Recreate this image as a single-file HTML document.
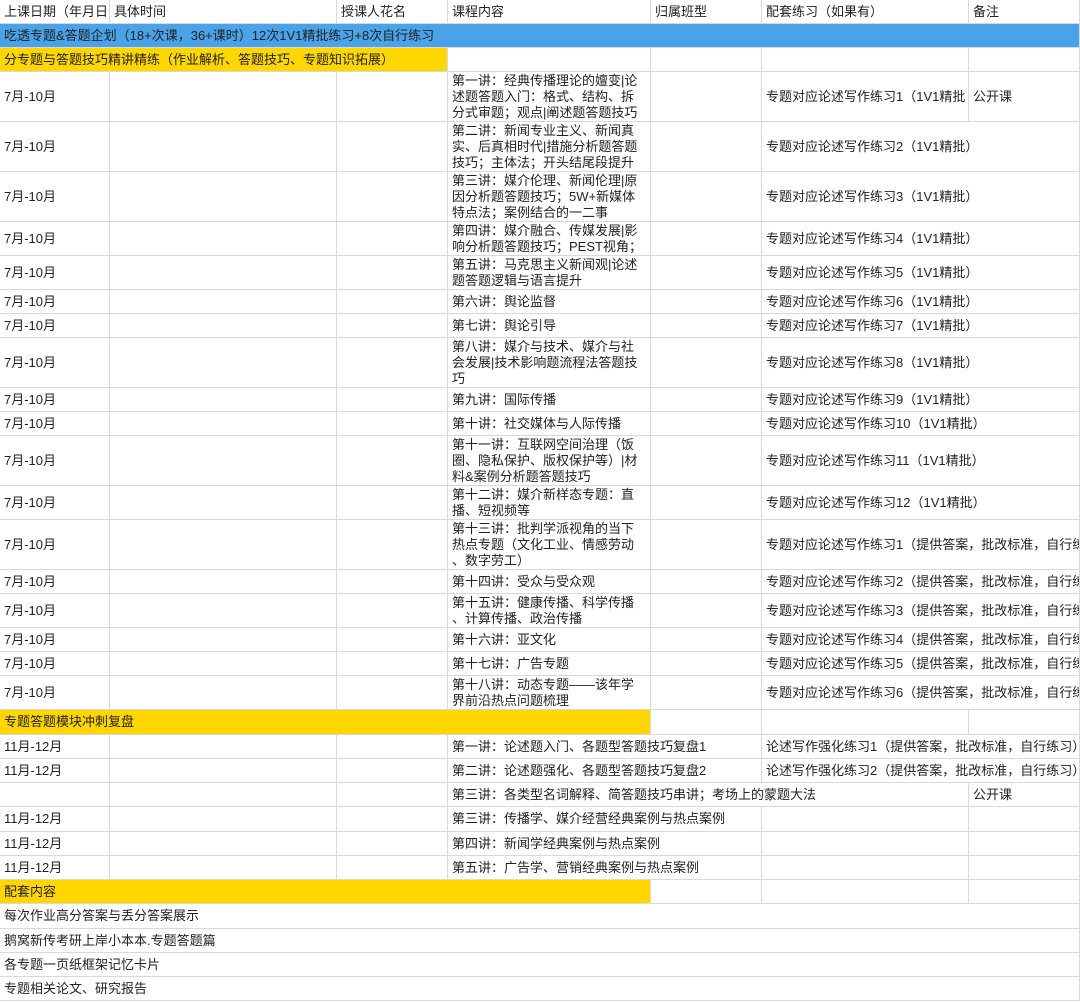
<!DOCTYPE html>
<html><head><meta charset="utf-8">
<style>
html,body{margin:0;padding:0;background:#fff;}
body{width:1080px;height:1002px;position:relative;overflow:hidden;font-family:"Liberation Sans","Noto Sans CJK SC",sans-serif;font-size:13px;color:#222;}
.c{position:absolute;box-sizing:border-box;border-right:1px solid #d9d9d9;border-bottom:1px solid #d9d9d9;padding:0 4px;display:flex;align-items:center;line-height:16px;white-space:nowrap;overflow:hidden;}
.b{background:#4aa3e8;}
.y{background:#ffd600;}
</style></head><body>
<div class="c" style="left:0;top:0;width:110px;height:24px">上课日期（年月日</div>
<div class="c" style="left:110px;top:0;width:227px;height:24px">具体时间</div>
<div class="c" style="left:337px;top:0;width:111px;height:24px">授课人花名</div>
<div class="c" style="left:448px;top:0;width:203px;height:24px">课程内容</div>
<div class="c" style="left:651px;top:0;width:111px;height:24px">归属班型</div>
<div class="c" style="left:762px;top:0;width:207px;height:24px">配套练习（如果有）</div>
<div class="c" style="left:969px;top:0;width:111px;height:24px">备注</div>
<div class="c b" style="left:0;top:24px;width:1080px;height:24px">吃透专题&amp;答题企划（18+次课，36+课时）12次1V1精批练习+8次自行练习</div>
<div class="c y" style="left:0;top:48px;width:448px;height:24px">分专题与答题技巧精讲精练（作业解析、答题技巧、专题知识拓展）</div>
<div class="c" style="left:448px;top:48px;width:203px;height:24px"></div>
<div class="c" style="left:651px;top:48px;width:111px;height:24px"></div>
<div class="c" style="left:762px;top:48px;width:207px;height:24px"></div>
<div class="c" style="left:969px;top:48px;width:111px;height:24px"></div>
<div id="rows"></div>
<script>
var R=[
[72,50,"7月-10月","第一讲：经典传播理论的嬗变|论<br>述题答题入门：格式、结构、拆<br>分式审题；观点|阐述题答题技巧","专题对应论述写作练习1（1V1精批","公开课"],
[122,50,"7月-10月","第二讲：新闻专业主义、新闻真<br>实、后真相时代|措施分析题答题<br>技巧；主体法；开头结尾段提升","专题对应论述写作练习2（1V1精批）"],
[172,50,"7月-10月","第三讲：媒介伦理、新闻伦理|原<br>因分析题答题技巧；5W+新媒体<br>特点法；案例结合的一二事","专题对应论述写作练习3（1V1精批）"],
[222,34,"7月-10月","第四讲：媒介融合、传媒发展|影<br>响分析题答题技巧；PEST视角；","专题对应论述写作练习4（1V1精批）"],
[256,34,"7月-10月","第五讲：马克思主义新闻观|论述<br>题答题逻辑与语言提升","专题对应论述写作练习5（1V1精批）"],
[290,24,"7月-10月","第六讲：舆论监督","专题对应论述写作练习6（1V1精批）"],
[314,24,"7月-10月","第七讲：舆论引导","专题对应论述写作练习7（1V1精批）"],
[338,50,"7月-10月","第八讲：媒介与技术、媒介与社<br>会发展|技术影响题流程法答题技<br>巧","专题对应论述写作练习8（1V1精批）"],
[388,24,"7月-10月","第九讲：国际传播","专题对应论述写作练习9（1V1精批）"],
[412,24,"7月-10月","第十讲：社交媒体与人际传播","专题对应论述写作练习10（1V1精批）"],
[436,50,"7月-10月","第十一讲：互联网空间治理（饭<br>圈、隐私保护、版权保护等）|材<br>料&amp;案例分析题答题技巧","专题对应论述写作练习11（1V1精批）"],
[486,34,"7月-10月","第十二讲：媒介新样态专题：直<br>播、短视频等","专题对应论述写作练习12（1V1精批）"],
[520,50,"7月-10月","第十三讲：批判学派视角的当下<br>热点专题（文化工业、情感劳动<br>、数字劳工）","专题对应论述写作练习1（提供答案，批改标准，自行练习）"],
[570,24,"7月-10月","第十四讲：受众与受众观","专题对应论述写作练习2（提供答案，批改标准，自行练习）"],
[594,34,"7月-10月","第十五讲：健康传播、科学传播<br>、计算传播、政治传播","专题对应论述写作练习3（提供答案，批改标准，自行练习）"],
[628,24,"7月-10月","第十六讲：亚文化","专题对应论述写作练习4（提供答案，批改标准，自行练习）"],
[652,24,"7月-10月","第十七讲：广告专题","专题对应论述写作练习5（提供答案，批改标准，自行练习）"],
[676,34,"7月-10月","第十八讲：动态专题——该年学<br>界前沿热点问题梳理","专题对应论述写作练习6（提供答案，批改标准，自行练习）"]
];
var h="";
function c(l,t,w,ht,txt,cls){h+='<div class="c'+(cls?' '+cls:'')+'" style="left:'+l+'px;top:'+t+'px;width:'+w+'px;height:'+ht+'px">'+(txt||'')+'</div>';}
R.forEach(function(r){
c(0,r[0],110,r[1],r[2]);c(110,r[0],227,r[1]);c(337,r[0],111,r[1]);c(448,r[0],203,r[1],r[3]);c(651,r[0],111,r[1]);
if(r[5]){c(762,r[0],207,r[1],r[4]);c(969,r[0],111,r[1],r[5]);}else c(762,r[0],318,r[1],r[4]);
});
c(0,710,651,25,"专题答题模块冲刺复盘","y");c(651,710,111,25);c(762,710,207,25);c(969,710,111,25);
var S=[[735,24,"11月-12月","第一讲：论述题入门、各题型答题技巧复盘1","论述写作强化练习1（提供答案，批改标准，自行练习）"],
[759,24,"11月-12月","第二讲：论述题强化、各题型答题技巧复盘2","论述写作强化练习2（提供答案，批改标准，自行练习）"]];
S.forEach(function(r){c(0,r[0],110,r[1],r[2]);c(110,r[0],227,r[1]);c(337,r[0],111,r[1]);c(448,r[0],314,r[1],r[3]);c(762,r[0],318,r[1],r[4]);});
c(0,783,110,24);c(110,783,227,24);c(337,783,111,24);c(448,783,521,24,"第三讲：各类型名词解释、简答题技巧串讲；考场上的蒙题大法");c(969,783,111,24,"公开课");
[[807,25,"第三讲：传播学、媒介经营经典案例与热点案例"],[832,24,"第四讲：新闻学经典案例与热点案例"],[856,24,"第五讲：广告学、营销经典案例与热点案例"]].forEach(function(r){
c(0,r[0],110,r[1],"11月-12月");c(110,r[0],227,r[1]);c(337,r[0],111,r[1]);c(448,r[0],314,r[1],r[2]);c(762,r[0],207,r[1]);c(969,r[0],111,r[1]);});
c(0,880,651,24,"配套内容","y");c(651,880,111,24);c(762,880,207,24);c(969,880,111,24);
[[904,25,"每次作业高分答案与丢分答案展示"],[929,24,"鹅窝新传考研上岸小本本.专题答题篇"],[953,24,"各专题一页纸框架记忆卡片"],[977,24,"专题相关论文、研究报告"]].forEach(function(r){c(0,r[0],1080,r[1],r[2]);});
document.getElementById("rows").innerHTML=h;
</script>
</body></html>
